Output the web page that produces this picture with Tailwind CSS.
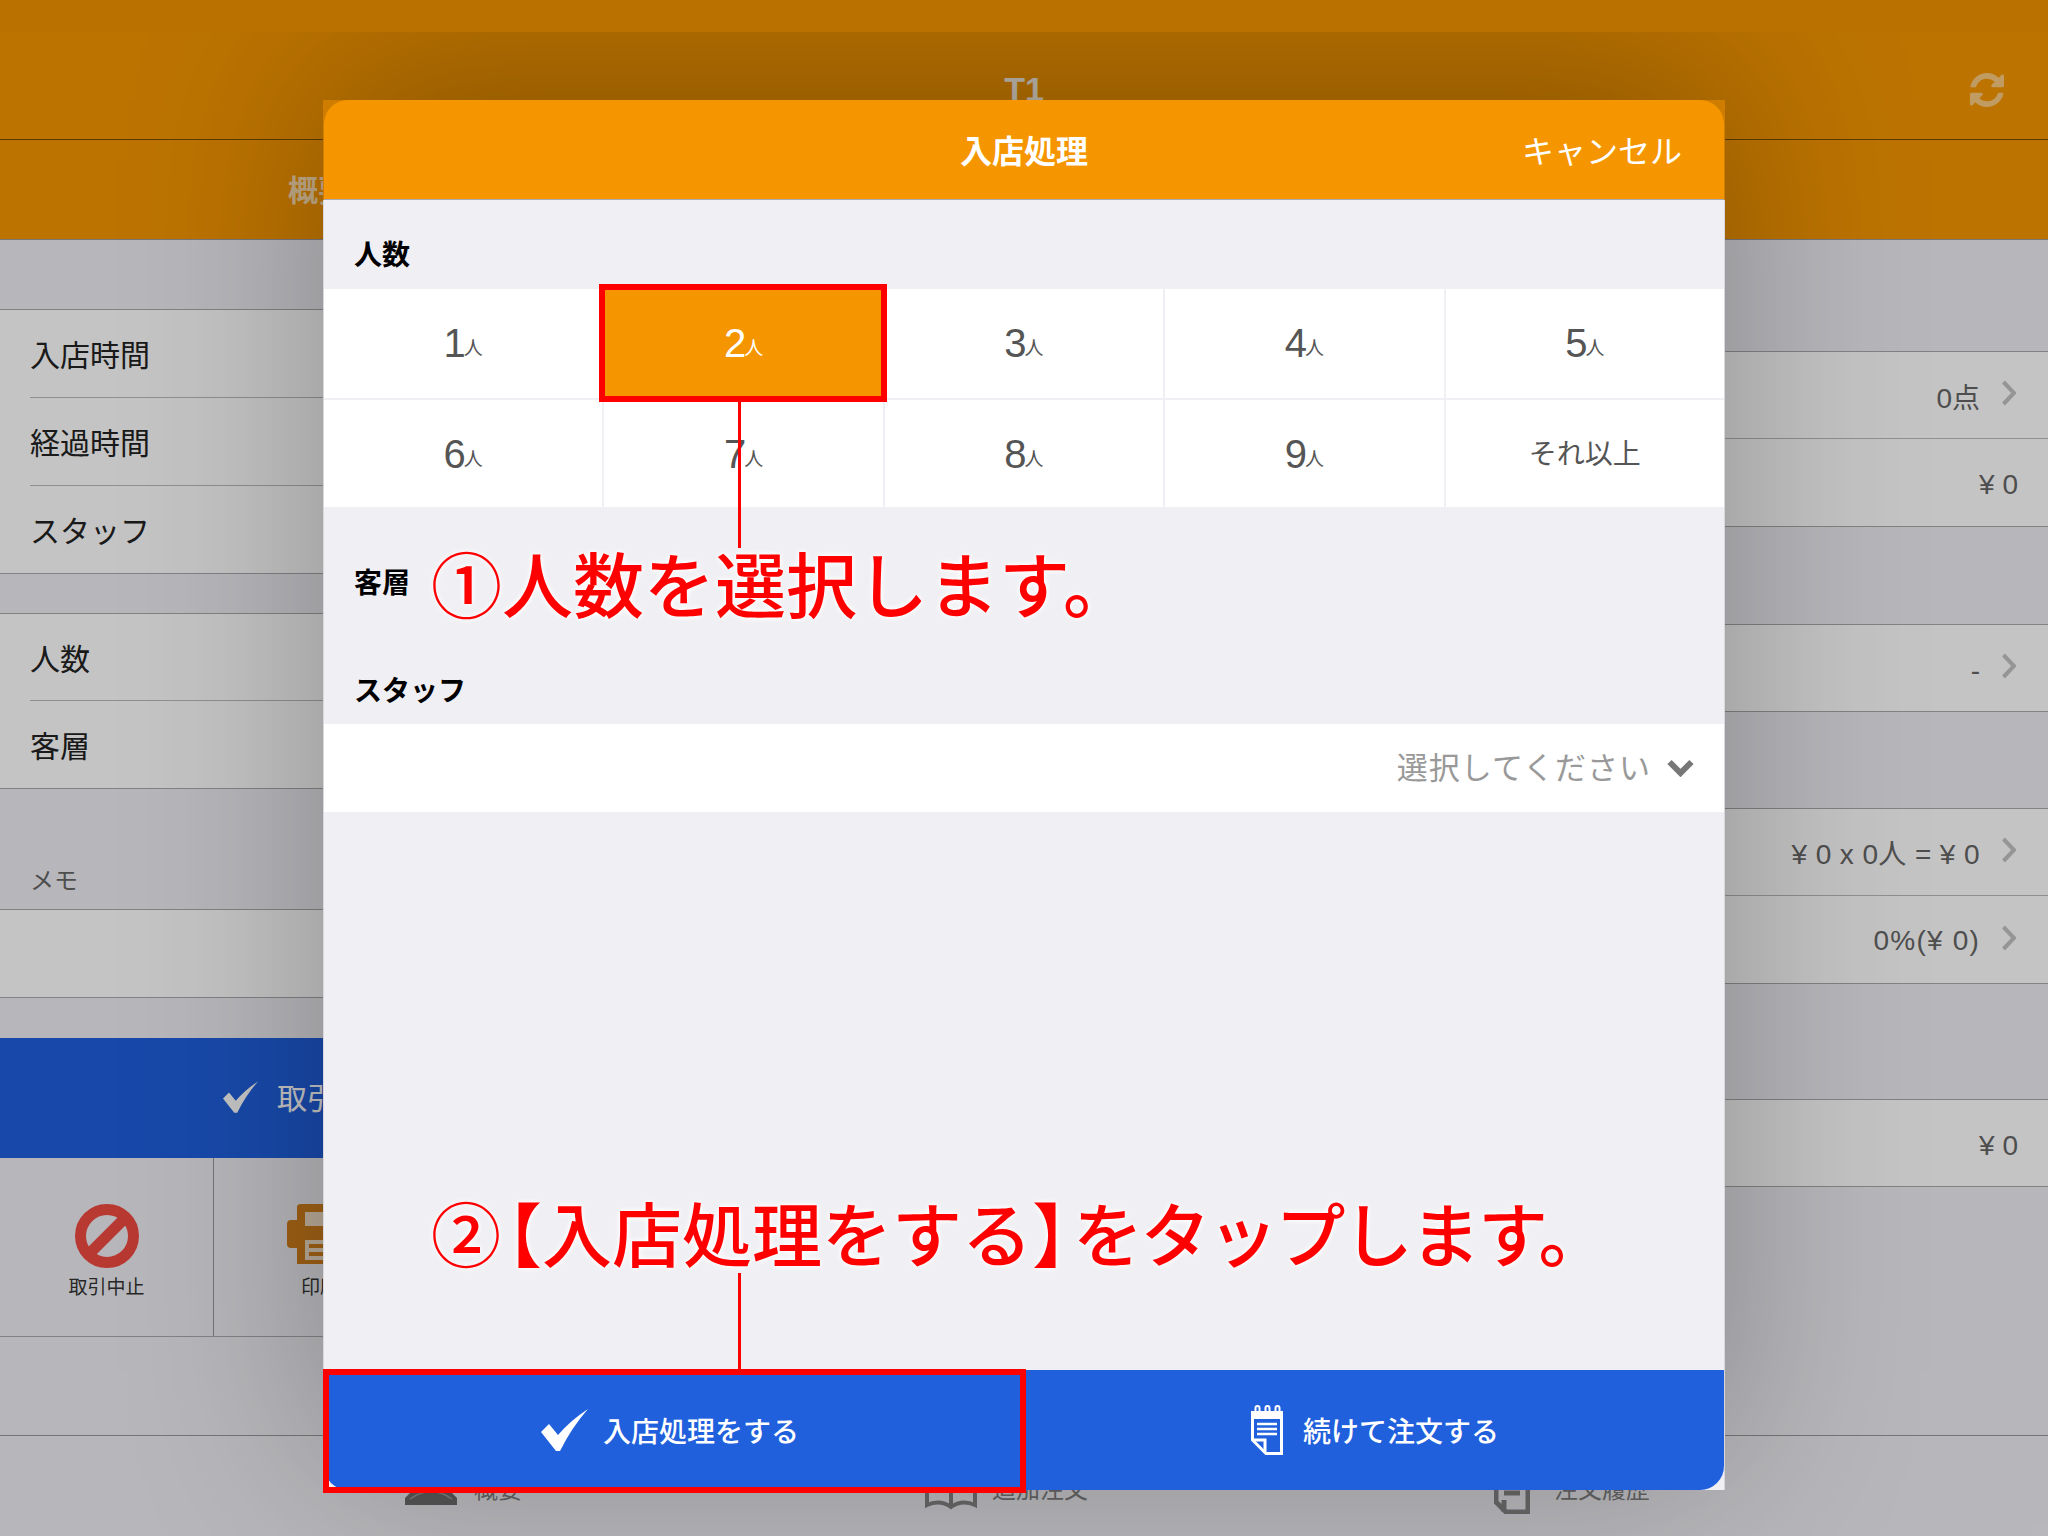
<!DOCTYPE html>
<html lang="ja">
<head>
    <meta charset="UTF-8">
    <title>入店処理</title>
    <script src="https://cdn.jsdelivr.net/npm/@tailwindcss/browser@4"></script>
</head>
<body class="bg-[#efeff4] font-['Noto_Sans_CJK_JP','Noto_Sans',sans-serif]">
<div class="relative w-[2048px] h-[1536px] overflow-hidden">

    <!-- 背面の画面 -->
    <div class="flex flex-col h-full">
        <header class="bg-[#f59600] h-[240px] flex flex-col border-b border-[#9a9aa0]">
            <div class="h-[140px] border-b border-[#7a4c00] relative flex items-end justify-center pb-[28px]">
                <span class="text-white/90 font-['Liberation_Sans',sans-serif] text-[34px] leading-[44px] font-bold">T1</span>
                <svg class="absolute left-[1970px] top-[73px] w-[34px] h-[34px]" viewBox="128 128 1536 1536" fill="#ffffff" fill-opacity="0.5"><path d="M1639 1056q0 5-1 7-64 268-268 434.5t-478 166.5q-146 0-282.5-55t-243.5-157l-129 129q-19 19-45 19t-45-19-19-45v-448q0-26 19-45t45-19h448q26 0 45 19t19 45-19 45l-137 137q71 66 161 102t187 36q134 0 250-65t186-179q11-17 53-117 8-23 30-23h192q13 0 22.5 9.5t9.5 22.5zm25-800v448q0 26-19 45t-45 19h-448q-26 0-45-19t-19-45 19-45l138-138q-148-137-349-137-134 0-250 65t-186 179q-11 17-53 117-8 23-30 23h-199q-13 0-22.5-9.5t-9.5-22.5v-7q65-268 270-434.5t480-166.5q146 0 284 55.5t245 156.5l130-129q19-19 45-19t45 19 19 45z"/></svg>
            </div>
            <div class="flex-1 flex items-center pl-[288px]"><span class="text-white/70 text-[30px] font-bold -mt-[2px]">概要</span></div>
        </header>

        <main class="flex-1 flex text-[30px] text-[#222]">
            <!-- 左カラム -->
            <section class="w-[1024px] flex flex-col">
                <div class="h-[69px]"></div>
                <div class="bg-white border-t border-[#aaa] h-[264px] flex flex-col">
                    <div class="h-[88px] ml-[30px] border-b border-[#bbb] flex items-center">入店時間</div>
                    <div class="h-[88px] ml-[30px] border-b border-[#bbb] flex items-center">経過時間</div>
                    <div class="h-[87px] ml-[30px] flex items-center">スタッフ</div>
                </div>
                <div class="h-[40px] border-t border-[#aaa]"></div>
                <div class="bg-white border-y border-[#aaa] h-[176px] flex flex-col">
                    <div class="h-[87px] ml-[30px] border-b border-[#bbb] flex items-center">人数</div>
                    <div class="h-[87px] ml-[30px] flex items-center">客層</div>
                </div>
                <div class="h-[120px] flex items-end pl-[30px] pb-[12px] text-[24px] text-[#666]">メモ</div>
                <div class="bg-white border-y border-[#aaa] h-[89px]"></div>
                <div class="h-[40px]"></div>
                <div class="bg-[#2060dd] h-[120px] flex items-center pl-[223px] text-white">
                    <svg class="w-[36px] h-[36px] mr-[18px] -mt-[2px]" viewBox="0 0 48 42" fill="#fff"><path d="M0 23 L8 15 L17 26 Q30 11 47 0 Q31 18 19 42 L15 42 Z"/></svg>
                    <span class="text-[30px] -mt-[3px]">取引完了</span>
                </div>
                <div class="h-[179px] flex border-b border-[#aaa]">
                    <div class="w-[214px] border-r border-[#999] flex flex-col items-center pt-[46px]">
                        <svg class="w-[64px] h-[64px]" viewBox="0 0 64 64" fill="none" stroke="#f04a42" stroke-width="11"><circle cx="32" cy="32" r="26.5"/><path d="M13 51 L51 13"/></svg>
                        <span class="text-[19px] leading-[28px] mt-[4px] text-[#333]">取引中止</span>
                    </div>
                    <div class="w-[214px] flex flex-col items-center pt-[46px]">
                        <svg class="w-[64px] h-[64px] -ml-[4px]" viewBox="0 0 64 64"><path fill="#d07f1c" d="M10 16 V3 Q10 0 14 0 H50 Q54 0 54 3 V16 H60 Q64 16 64 20 V40 Q64 44 60 44 H54 V60 H10 V44 H4 Q0 44 0 40 V20 Q0 16 4 16 Z"/><path fill="#fff" fill-opacity="0.75" d="M18 8 H46 V22 H18 Z M18 36 H46 V56 H18 Z"/><path stroke="#d07f1c" stroke-width="4" d="M22 42 H42 M22 50 H42"/></svg>
                        <span class="text-[19px] leading-[28px] mt-[4px] -ml-[2px] text-[#333]">印刷</span>
                    </div>
                </div>
            </section>

            <!-- 右カラム -->
            <section class="flex-1 flex flex-col text-[#666] text-[28px] font-['Liberation_Sans','Noto_Sans_CJK_JP',sans-serif]">
                <div class="h-[111px]"></div>
                <div class="bg-white border-y border-[#aaa] h-[176px] flex flex-col">
                    <div class="h-[87px] ml-[30px] pr-[32px] border-b border-[#bbb] flex items-center justify-end"><span class="mt-[7px]">0点</span>
                        <svg class="w-[14px] h-[26px] ml-[22px] -mt-[4px]" viewBox="0 0 14 26" fill="none" stroke="#c2c2c2" stroke-width="4"><path d="M1.5 2 L12 13 L1.5 24"/></svg></div>
                    <div class="h-[87px] ml-[30px] pr-[30px] flex items-center justify-end"><span class="mt-[5px]">¥ 0</span></div>
                </div>
                <div class="h-[97px]"></div>
                <div class="bg-white border-y border-[#aaa] h-[88px] pr-[32px] flex items-center justify-end"><span class="mt-[5px]">-</span>
                    <svg class="w-[14px] h-[26px] ml-[22px] -mt-[4px]" viewBox="0 0 14 26" fill="none" stroke="#c2c2c2" stroke-width="4"><path d="M1.5 2 L12 13 L1.5 24"/></svg></div>
                <div class="h-[96px]"></div>
                <div class="bg-white border-y border-[#aaa] h-[176px] flex flex-col">
                    <div class="h-[87px] pr-[32px] border-b border-[#bbb] flex items-center justify-end"><span class="mt-[5px] tracking-[0.4px]">¥ 0 x 0人 = ¥ 0</span>
                        <svg class="w-[14px] h-[26px] ml-[22px] -mt-[4px]" viewBox="0 0 14 26" fill="none" stroke="#c2c2c2" stroke-width="4"><path d="M1.5 2 L12 13 L1.5 24"/></svg></div>
                    <div class="h-[87px] pr-[32px] flex items-center justify-end"><span class="mt-[3px] tracking-[1.2px]">0%(¥ 0)</span>
                        <svg class="w-[14px] h-[26px] ml-[22px] -mt-[4px]" viewBox="0 0 14 26" fill="none" stroke="#c2c2c2" stroke-width="4"><path d="M1.5 2 L12 13 L1.5 24"/></svg></div>
                </div>
                <div class="h-[115px]"></div>
                <div class="bg-white border-y border-[#aaa] h-[88px] pr-[30px] flex items-center justify-end"><span class="mt-[5px]">¥ 0</span></div>
            </section>
        </main>

        <!-- タブバー -->
        <nav class="absolute left-0 right-0 top-[1435px] h-[101px] border-t border-[#999] flex text-[24px] text-[#808080]">
            <svg class="absolute left-[405px] top-[46px] w-[52px] h-[24px]" viewBox="0 0 52 24"><path fill="#6e6e6e" d="M12 4 Q26 -4 40 4 L52 16 V23 H0 V16 Z"/><path fill="none" stroke="#a0a0a0" stroke-width="1.5" d="M5 17 Q26 2 47 17"/></svg>
            <span class="absolute left-[474px] top-[34px]">概要</span>
            <svg class="absolute left-[925px] top-[50px] w-[52px] h-[24px]" viewBox="0 0 52 24" fill="none" stroke="#858585" stroke-width="4"><path d="M2 0 V19 Q15 13 26 21 Q37 13 50 19 V0 M26 0 V20"/></svg>
            <span class="absolute left-[992px] top-[34px]">追加注文</span>
            <svg class="absolute left-[1494px] top-[50px] w-[36px] h-[28px]" viewBox="0 0 36 28" fill="none" stroke="#858585" stroke-width="5"><path d="M2 0 V16 L12 26 H34 V0 M10 7 H26 M10 14 V26"/></svg>
            <span class="absolute left-[1554px] top-[34px]">注文履歴</span>
        </nav>
    </div>

    <!-- 暗幕 -->
    <div class="absolute inset-0 bg-black/[0.23]"></div>

    <!-- ステータスバー -->
    <div class="absolute top-0 left-0 right-0 h-[32px] bg-[#ba7100] z-20"></div>

    <!-- モーダル -->
    <div class="absolute left-[323px] top-[100px] w-[1402px] h-[1390px] z-10 flex flex-col bg-[#d8d8dc] shadow-[0_-30px_180px_rgba(0,0,0,0.27)] px-px">
        <div class="bg-[#cf7d00] -mx-px px-px">
            <div class="h-[100px] bg-[#f59600] rounded-t-[24px] border-b border-[#a9a9b5] relative flex items-center justify-center text-white">
                <span class="text-[32px] font-bold -mt-[2px]">入店処理</span>
                <span class="absolute right-[42px] text-[32px] -mt-[2px]">キャンセル</span>
            </div>
        </div>
        <div class="flex-1 bg-[#efeff4] flex flex-col">
            <div class="h-[89px] flex items-end pl-[30px] pb-[19px] text-[28px] leading-[34px] font-bold text-black">人数</div>
            <div class="grid grid-cols-5 gap-[2px] bg-[#efeff4] text-[#555] h-[218px] font-['Liberation_Sans','Noto_Sans_CJK_JP',sans-serif]">
                <div class="bg-white flex items-center justify-center text-[40px] pb-[2px]">1<span class="text-[19px] mt-[14px] -ml-[2px]">人</span></div>
                <div class="bg-[#f59600] text-white flex items-center justify-center text-[40px] pb-[2px]">2<span class="text-[19px] mt-[14px] -ml-[2px]">人</span></div>
                <div class="bg-white flex items-center justify-center text-[40px] pb-[2px]">3<span class="text-[19px] mt-[14px] -ml-[2px]">人</span></div>
                <div class="bg-white flex items-center justify-center text-[40px] pb-[2px]">4<span class="text-[19px] mt-[14px] -ml-[2px]">人</span></div>
                <div class="bg-white flex items-center justify-center text-[40px] pb-[2px]">5<span class="text-[19px] mt-[14px] -ml-[2px]">人</span></div>
                <div class="bg-white flex items-center justify-center text-[40px]">6<span class="text-[19px] mt-[14px] -ml-[2px]">人</span></div>
                <div class="bg-white flex items-center justify-center text-[40px]">7<span class="text-[19px] mt-[14px] -ml-[2px]">人</span></div>
                <div class="bg-white flex items-center justify-center text-[40px]">8<span class="text-[19px] mt-[14px] -ml-[2px]">人</span></div>
                <div class="bg-white flex items-center justify-center text-[40px]">9<span class="text-[19px] mt-[14px] -ml-[2px]">人</span></div>
                <div class="bg-white flex items-center justify-center text-[28px] pt-[3px]">それ以上</div>
            </div>
            <div class="h-[109px] flex items-end pl-[30px] pb-[18px] text-[28px] leading-[34px] font-bold text-black">客層</div>
            <div class="h-[108px] flex items-end pl-[30px] pb-[18px] text-[28px] leading-[34px] font-bold text-black">スタッフ</div>
            <div class="h-[88px] bg-white flex items-center justify-end pr-[30px] text-[31px] text-[#999] tracking-[1px]">
                <span class="-mt-[3px]">選択してください</span>
                <svg class="w-[27px] h-[18px] ml-[16px] -mt-[1px]" viewBox="0 0 27 18" fill="none" stroke="#777" stroke-width="6"><path d="M2.5 3 L13.5 14 L24.5 3"/></svg>
            </div>
            <div class="flex-1"></div>
            <div class="h-[120px] flex text-white text-[28px] font-medium">
                <div class="w-[700px] bg-[#2060dd] rounded-bl-[24px] flex items-center justify-center gap-[14px] pr-[8px]">
                    <svg class="w-[48px] h-[42px]" viewBox="0 0 48 42" fill="#fff"><path d="M0 23 L8 15 L17 26 Q30 11 47 0 Q31 18 19 42 L15 42 Z"/></svg>
                    入店処理をする
                </div>
                <div class="flex-1 bg-[#2060dd] rounded-br-[24px] flex items-center justify-center gap-[20px] pl-[2px]">
                    <svg class="w-[32px] h-[50px]" viewBox="0 0 32 50" fill="none" stroke="#fff"><path stroke-width="2" d="M4.5 8 V3 Q4.5 1 6.5 1 Q8.5 1 8.5 3 V8 M14.5 8 V3 Q14.5 1 16.5 1 Q18.5 1 18.5 3 V8 M24.5 8 V3 Q24.5 1 26.5 1 Q28.5 1 28.5 3 V8"/><path fill="#fff" stroke="none" d="M0 6 H32 V14 H0 Z"/><path stroke-width="3" d="M1.5 10 V35 L15 48.5 H30.5 V10"/><path stroke-width="3" d="M2 35 H14 V48"/><path stroke-width="2.5" d="M6 19 H26 M6 24 H26 M6 29 H26"/></svg>
                    続けて注文する
                </div>
            </div>
        </div>
    </div>

    <!-- 注釈 -->
    <div class="absolute z-30 left-[599px] top-[284px] w-[288px] h-[118px] border-[6px] border-[#ff0000]"></div>
    <div class="absolute z-30 left-[738px] top-[402px] w-[3px] h-[146px] bg-[#ff0000]"></div>
    <div class="absolute z-30 left-[738px] top-[1273px] w-[3px] h-[96px] bg-[#ff0000]"></div>
    <div class="absolute z-30 left-[323px] top-[1369px] w-[703px] h-[124px] border-[6px] border-[#ff0000]"></div>
    <p class="absolute z-30 left-[431px] top-[531px] text-[71px] leading-[100px] font-medium text-[#ff0000] whitespace-nowrap [text-shadow:0_0_6px_#fff,0_0_6px_#fff]">①人数を選択します。</p>
    <p class="absolute z-30 left-[431px] top-[1182px] text-[70px] leading-[100px] font-medium text-[#ff0000] whitespace-nowrap [text-shadow:0_0_6px_#fff,0_0_6px_#fff]">②<span class="[font-feature-settings:'halt'] ml-[6px]">【</span>入店処理をする<span class="[font-feature-settings:'halt'] mr-[6px]">】</span><span class="tracking-[-2.5px]">をタップします。</span></p>
</div>
</body>
</html>
